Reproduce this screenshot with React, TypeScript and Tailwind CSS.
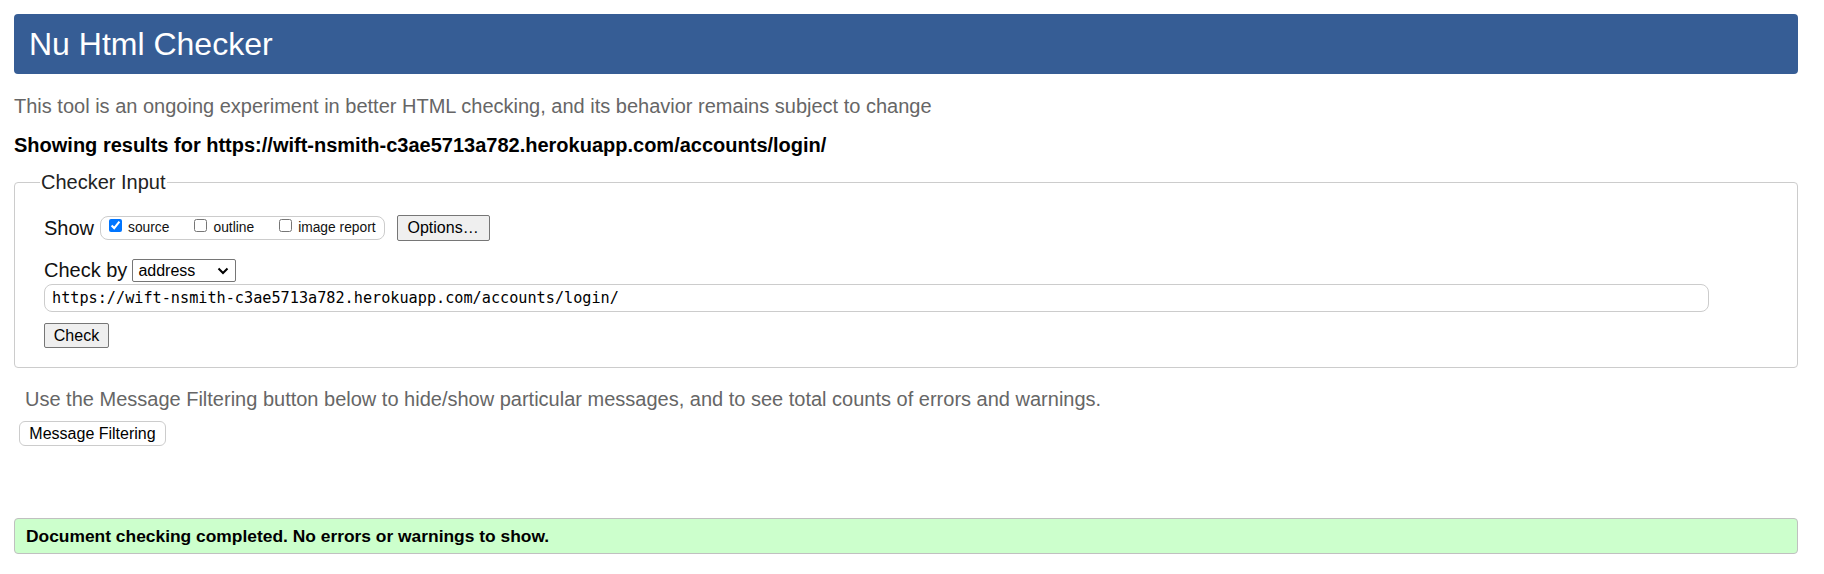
import React from "react";

function Chevron() {
  return (
    <svg width="12" height="8" viewBox="0 0 12 8" className="pointer-events-none">
      <path d="M1.5 1.5 L6 6 L10.5 1.5" fill="none" stroke="#000" strokeWidth="2" />
    </svg>
  );
}

function Check({ label, checked }: { label: string; checked?: boolean }) {
  return (
    <label className="flex items-center gap-[6px]">
      <input
        type="checkbox"
        defaultChecked={checked}
        className="m-0 mb-[5px] h-[13px] w-[13px] accent-[#0075ff]"
      />
      <span className="text-[13.8px] leading-[16px] text-[#111]">{label}</span>
    </label>
  );
}

export default function App() {
  return (
    <div
      className="bg-white pl-[14px] pr-[26px] pt-[14px] text-[#222]"
      style={{ fontFamily: "'Liberation Sans', Arial, sans-serif" }}
    >
      <div className="flex h-[60px] items-center rounded-[4px] bg-[#365d95] pl-[15px]">
        <h1 className="text-[32px] font-normal leading-[37px] text-white">Nu Html Checker</h1>
      </div>

      <p className="mt-[20px] text-[20px] leading-[24px] text-[#666]">
        This tool is an ongoing experiment in better HTML checking, and its behavior remains subject to change
      </p>

      <p className="mt-[15px] text-[20px] font-bold leading-[24px] text-black">
        Showing results for https://wift-nsmith-c3ae5713a782.herokuapp.com/accounts/login/
      </p>

      <fieldset className="mt-[14px] rounded-[4px] border border-[#cccccc] pb-[19px] pl-[29px] pr-[29px] pt-[21px]">
        <legend className="ml-[-4px] px-[1px] text-[20px] leading-[23px] text-[#222]">Checker Input</legend>

        <div className="flex h-[26px] items-center">
          <span className="text-[20px] leading-[23px] text-[#111]">Show</span>
          <div className="ml-[6px] flex h-[24px] items-center gap-[25px] rounded-[8px] border border-[#cccccc] pl-[8px] pr-[8px]">
            <Check label="source" checked />
            <Check label="outline" />
            <Check label="image report" />
          </div>
          <button className="ml-[12px] flex h-[26px] w-[93px] items-center justify-center rounded-[2px] border border-[#767676] bg-[#efefef] text-[16px] leading-[18px] text-black">
            Options…
          </button>
        </div>

        <div className="mt-[18px] flex h-[23px] items-center">
          <span className="text-[20px] leading-[23px] text-[#111]">Check by</span>
          <div className="relative ml-[5px] flex h-[23px] w-[104px] items-center rounded-[2px] border border-[#767676] bg-white">
            <select className="h-full w-full appearance-none bg-transparent pl-[5px] text-[16px] leading-[18px] text-black outline-none">
              <option>address</option>
            </select>
            <span className="absolute right-[6px] top-[7px]">
              <Chevron />
            </span>
          </div>
        </div>

        <div className="mt-[2px]">
          <input
            type="text"
            readOnly
            value="https://wift-nsmith-c3ae5713a782.herokuapp.com/accounts/login/"
            className="h-[28px] w-[1665px] rounded-[8px] border border-[#cccccc] bg-white pl-[7px] text-[15.2px] text-black outline-none"
            style={{ fontFamily: "'DejaVu Sans Mono', 'Liberation Mono', monospace" }}
          />
        </div>

        <div className="mt-[11px]">
          <button className="flex h-[25px] w-[65px] items-center justify-center rounded-[2px] border border-[#767676] bg-[#efefef] text-[16px] leading-[18px] text-black">
            Check
          </button>
        </div>
      </fieldset>

      <p className="mt-[19px] pl-[11px] text-[20px] leading-[24px] text-[#666]">
        Use the Message Filtering button below to hide/show particular messages, and to see total counts of errors and warnings.
      </p>

      <button className="ml-[5px] mt-[10px] flex h-[25px] w-[147px] items-center justify-center rounded-[6px] border border-[#cccccc] bg-white text-[16px] leading-[18px] text-black">
        Message Filtering
      </button>

      <div className="mt-[72px] flex h-[36px] items-center rounded-[4px] border border-[#c0c0c0] bg-[#ccffcc] pl-[11px]">
        <span className="text-[17.4px] font-bold leading-[20px] text-black">
          Document checking completed. No errors or warnings to show.
        </span>
      </div>
    </div>
  );
}
